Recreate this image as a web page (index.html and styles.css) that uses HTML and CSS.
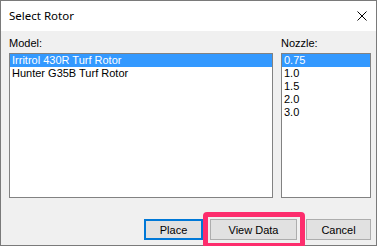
FILE: index.html
```html
<!DOCTYPE html>
<html>
<head>
<meta charset="utf-8">
<link rel="stylesheet" href="styles.css">
</head>
<body>
<div class="window">
  <div class="titlebar">
    <span class="title">Select Rotor</span>
    <svg class="close" width="10" height="10" viewBox="0 0 10 10"><path d="M0.5 0.5 L9.5 9.5 M9.5 0.5 L0.5 9.5" stroke="#000" stroke-width="1" fill="none"/></svg>
  </div>
  <div class="content">
    <div class="lists">
      <div class="col col-model">
        <div class="label">Model:</div>
        <ul class="listbox">
          <li class="selected">Irritrol 430R Turf Rotor</li>
          <li>Hunter G35B Turf Rotor</li>
        </ul>
      </div>
      <div class="col col-nozzle">
        <div class="label">Nozzle:</div>
        <ul class="listbox">
          <li class="selected">0.75</li>
          <li>1.0</li>
          <li>1.5</li>
          <li>2.0</li>
          <li>3.0</li>
        </ul>
      </div>
    </div>
    <div class="buttons">
      <button class="btn btn-place default">Place</button>
      <span class="highlight"><button class="btn btn-view">View Data</button></span>
      <button class="btn btn-cancel">Cancel</button>
    </div>
  </div>
</div>
</body>
</html>
```

FILE: styles.css
```css
html, body {
  margin: 0;
  padding: 0;
  background: #ffffff;
}

.window {
  width: 375px;
  height: 244px;
  border: 1px solid #7a7a7a;
  display: flex;
  flex-direction: column;
  background: #f0f0f0;
  font-family: "Liberation Sans", Arial, sans-serif;
  font-size: 11px;
  color: #000;
}

.titlebar {
  height: 30px;
  background: #ffffff;
  display: flex;
  align-items: center;
  justify-content: space-between;
  padding: 0 9px 0 8px;
}

.title {
  font-family: "Noto Sans", "Open Sans", sans-serif;
  font-size: 11.5px;
  position: relative;
  top: -1px;
}

.close {
  display: block;
  margin-top: -1px;
}

.content {
  flex: 1;
  display: flex;
  flex-direction: column;
  padding: 6px 5px 0 8px;
}

.lists {
  display: flex;
  gap: 8px;
}

.col {
  display: flex;
  flex-direction: column;
}

.col-model { width: 264px; }
.col-nozzle { width: 90px; }

.label {
  height: 13px;
  line-height: 13px;
  margin-bottom: 3px;
}

.listbox {
  list-style: none;
  margin: 0;
  padding: 0;
  height: 143px;
  border: 1px solid #828282;
  background: #ffffff;
}

.listbox li {
  height: 13px;
  line-height: 13px;
  padding-left: 2px;
  white-space: nowrap;
}

.listbox li.selected {
  background: #3399ff;
  color: #ffffff;
}

.buttons {
  display: flex;
  justify-content: flex-end;
  align-items: center;
  margin-top: 21px;
}

.btn {
  font-family: "Liberation Sans", Arial, sans-serif;
  font-size: 11px;
  color: #000;
  background: #e1e1e1;
  border: 1px solid #adadad;
  height: 21px;
  padding: 0;
  margin: 0;
  box-sizing: border-box;
}

.btn.default {
  border: 2px solid #0078d7;
}

.btn-place { width: 59px; }
.btn-view { width: 87px; display: block; }
.btn-cancel { width: 65px; }

.highlight {
  position: relative;
  margin: 0 9px 0 7px;
}

.highlight::after {
  content: "";
  position: absolute;
  left: -7px;
  right: -8px;
  top: -7px;
  bottom: -8px;
  border: 5px solid #fd2d6d;
  border-radius: 4px;
}
```
